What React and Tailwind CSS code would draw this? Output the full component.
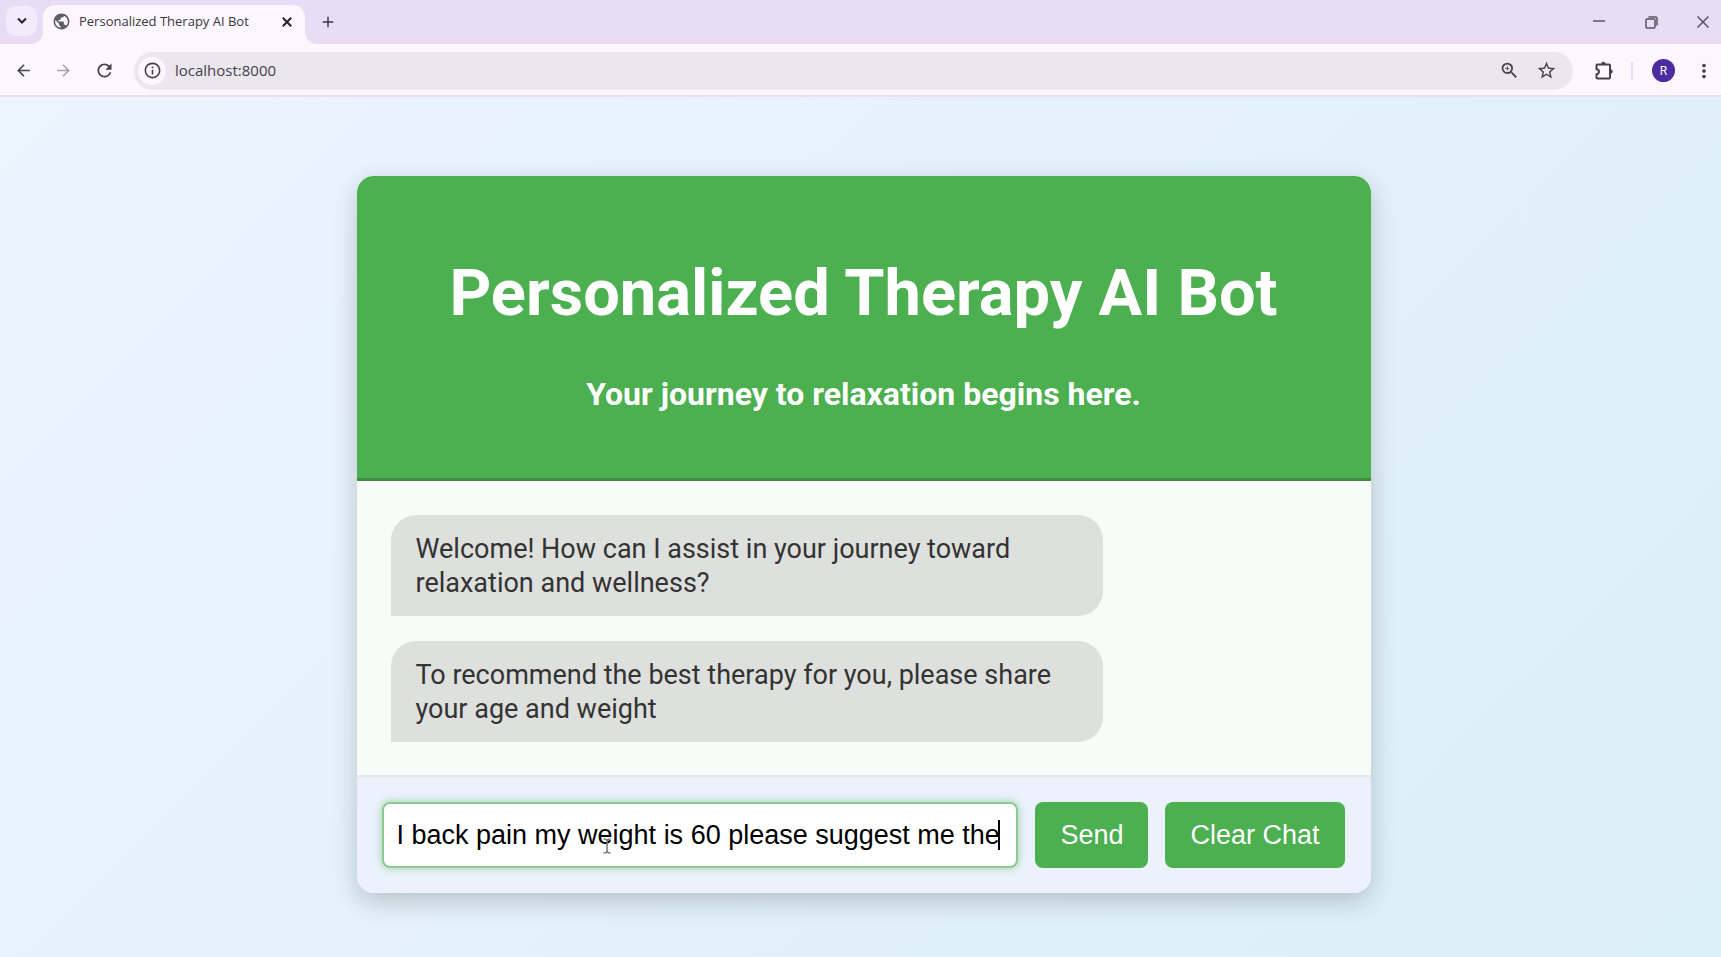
import { MdArrowBack, MdArrowForward, MdRefresh, MdInfoOutline, MdZoomIn, MdStarBorder, MdPublic, MdAdd, MdMoreVert } from "react-icons/md";

const messages = [
  "Welcome! How can I assist in your journey toward relaxation and wellness?",
  "To recommend the best therapy for you, please share your age and weight",
];

function ExtensionIcon() {
  return (
    <svg width="22" height="22" viewBox="0 0 22 22" fill="none" stroke="#45424b" strokeWidth="2" strokeLinejoin="round">
      <path d="M4.500 4.500h11.500a1 1 0 0 1 1 1v12a1 1 0 0 1-1 1h-11.500a1 1 0 0 1-1-1v-3.200a2.300 2.300 0 0 0 0-5v-3.800a1 1 0 0 1 1-1z" />
      <path d="M8.200 4a2.200 2.200 0 0 1 4.400 0zM17.500 9.300a2.200 2.200 0 0 1 0 4.400z" fill="#45424b" stroke="none" />
    </svg>
  );
}

function TabStrip() {
  return (
    <div className="flex h-11 bg-[#e9dcf5] pl-1.5 text-[#3b3842]">
      <button aria-label="Search tabs" className="mt-1.5 flex h-[30px] w-[31px] items-center justify-center rounded-[10px] bg-[#f4eafc]">
        <svg width="10" height="8" viewBox="0 0 10 8" fill="none" stroke="#26232c" strokeWidth="2"><path d="M1 1.500l4 4 4-4" /></svg>
      </button>
      <div className="relative ml-1.5 mt-[5px] flex w-[262px] items-center rounded-t-xl bg-[#fcf7fe] pb-1.5 pl-[9px] pr-3">
        <svg className="absolute -left-3 bottom-0" width="12" height="12" viewBox="0 0 12 12"><path d="M12 0v12H0A12 12 0 0 0 12 0z" fill="#fcf7fe" /></svg>
        <svg className="absolute -right-3 bottom-0" width="12" height="12" viewBox="0 0 12 12"><path d="M0 0v12h12A12 12 0 0 1 0 0z" fill="#fcf7fe" /></svg>
        <MdPublic size={19} color="#5c6064" />
        <span className="ml-2 flex-1 whitespace-nowrap font-['Open_Sans',sans-serif] text-[13px]">Personalized Therapy AI Bot</span>
        <button aria-label="Close tab" className="flex size-3 items-center justify-center">
          <svg width="10" height="10" viewBox="0 0 10 10" fill="none" stroke="#26232c" strokeWidth="2"><path d="M0.800 0.800l8.400 8.400M9.200 0.800l-8.400 8.400" /></svg>
        </button>
      </div>
      <button aria-label="New tab" className="ml-3.5"><MdAdd size={18} /></button>
      <div className="ml-auto flex items-center gap-4">
        <button aria-label="Minimize" className="flex h-10 w-9 items-center justify-center">
          <svg width="12" height="12" viewBox="0 0 12 12" stroke="#5a5362" strokeWidth="1.500"><path d="M0 5h12" /></svg>
        </button>
        <button aria-label="Restore" className="flex h-10 w-9 items-center justify-center">
          <svg width="13" height="13" viewBox="0 0 13 13" fill="none" stroke="#5a5362" strokeWidth="1.500"><rect x="1" y="3" width="9" height="9" rx="1" /><path d="M3.500 1h7a1.500 1.500 0 0 1 1.500 1.500v7" /></svg>
        </button>
        <button aria-label="Close window" className="flex h-10 w-9 items-center justify-center">
          <svg width="12" height="12" viewBox="0 0 12 12" stroke="#5a5362" strokeWidth="1.500"><path d="M0.500 0.500l11 11M11.500 0.500l-11 11" /></svg>
        </button>
      </div>
    </div>
  );
}

function Toolbar() {
  return (
    <div className="flex h-[53px] items-center border-b-2 border-[#e8e1ec] bg-[#fcf7fe] pl-3.5 pr-1.5 pt-0.5 text-[#45424b]">
      <button aria-label="Back"><MdArrowBack size={19} /></button>
      <button aria-label="Forward" className="ml-[21px] text-[#a7a2ab]"><MdArrowForward size={19} /></button>
      <button aria-label="Reload" className="ml-[21px]"><MdRefresh size={21} /></button>
      <div className="ml-[19px] flex h-[38px] flex-1 items-center rounded-full bg-[#ece6ef] pl-1 pr-4">
        <button aria-label="Site information" className="flex size-7 items-center justify-center rounded-full bg-[#fcf7fe]"><MdInfoOutline size={19} /></button>
        <input aria-label="Address" defaultValue="localhost:8000" className="ml-[9px] min-w-0 flex-1 bg-transparent font-['Open_Sans',sans-serif] text-[15px] outline-none" />
        <button aria-label="Zoom"><MdZoomIn size={21} /></button>
        <button aria-label="Bookmark" className="ml-4"><MdStarBorder size={21} /></button>
      </div>
      <button aria-label="Extensions" className="ml-5"><ExtensionIcon /></button>
      <span className="ml-4 h-[18px] w-0.5 bg-[#eadcf6]" />
      <button aria-label="Profile" className="ml-[19px] flex size-[23px] items-center justify-center rounded-full bg-[#4b2ba0] font-['Roboto',sans-serif] text-xs text-white">R</button>
      <button aria-label="Menu" className="ml-[18px]"><MdMoreVert size={22} /></button>
    </div>
  );
}

export default function App() {
  return (
    <div className="flex min-h-screen flex-col bg-[#e4f1f8] font-['Roboto',sans-serif]">
      <TabStrip />
      <Toolbar />
      <main className="flex flex-1 items-start justify-center bg-[linear-gradient(135deg,#edf4fd_0%,#dbeff6_100%)] pb-[62px] pl-1.5 pt-[79px]">
        <section className="w-full max-w-[1014px] overflow-hidden rounded-[17px] bg-[#f9fbf8] shadow-[0_8px_26px_rgba(0,0,0,0.2)]">
          <header className="border-b-[3px] border-[#3f8f43] bg-[#4caf50] pb-[65px] pt-[77px] text-center font-bold text-white">
            <h1 className="text-[65px] leading-[80px]">Personalized Therapy AI Bot</h1>
            <h3 className="mt-[42px] text-[32px] leading-[38px]">Your journey to relaxation begins here.</h3>
          </header>
          <div className="flex flex-col items-start gap-[25px] px-[34px] pb-[33px] pt-[34px]">
            {messages.map((m) => (
              <p key={m} className="w-[calc(70%+50px)] rounded-[25px] rounded-bl-none bg-[#dee0dd] px-[25px] pb-4 pt-[17px] text-[27px] leading-[34px] text-[#333333]">{m}</p>
            ))}
          </div>
          <form onSubmit={(e) => e.preventDefault()} className="flex gap-[17px] border-t-2 border-[#e4e8ec] bg-[#ecf2fc] py-[25px] pl-[25px] pr-[26px] font-['Liberation_Sans',sans-serif] text-[27px]">
            <div className="relative min-w-0 flex-1">
              <input aria-label="Message" defaultValue="I back pain my weight is 60 please suggest me the" className="h-[66px] w-full rounded-lg border-2 border-[#8ccb90] bg-white pl-[13px] pr-3 text-black shadow-[0_0_8px_rgba(76,175,80,0.5)] outline-none" />
              <span className="absolute right-[18px] top-[18px] h-[30px] w-0.5 bg-black" />
              <svg className="absolute left-[220px] top-9" width="10" height="16" viewBox="0 0 10 16" fill="none" stroke="#777777" strokeWidth="1.500"><path d="M1.500 1q3.500 0 3.500 2v10q0 2-3.500 2M8.500 1q-3.500 0-3.500 2v10q0 2 3.500 2" /></svg>
            </div>
            <button type="submit" className="rounded-lg bg-[#4caf50] px-[25px] text-white">Send</button>
            <button type="button" className="rounded-lg bg-[#4caf50] px-[25px] text-white">Clear Chat</button>
          </form>
        </section>
      </main>
    </div>
  );
}
